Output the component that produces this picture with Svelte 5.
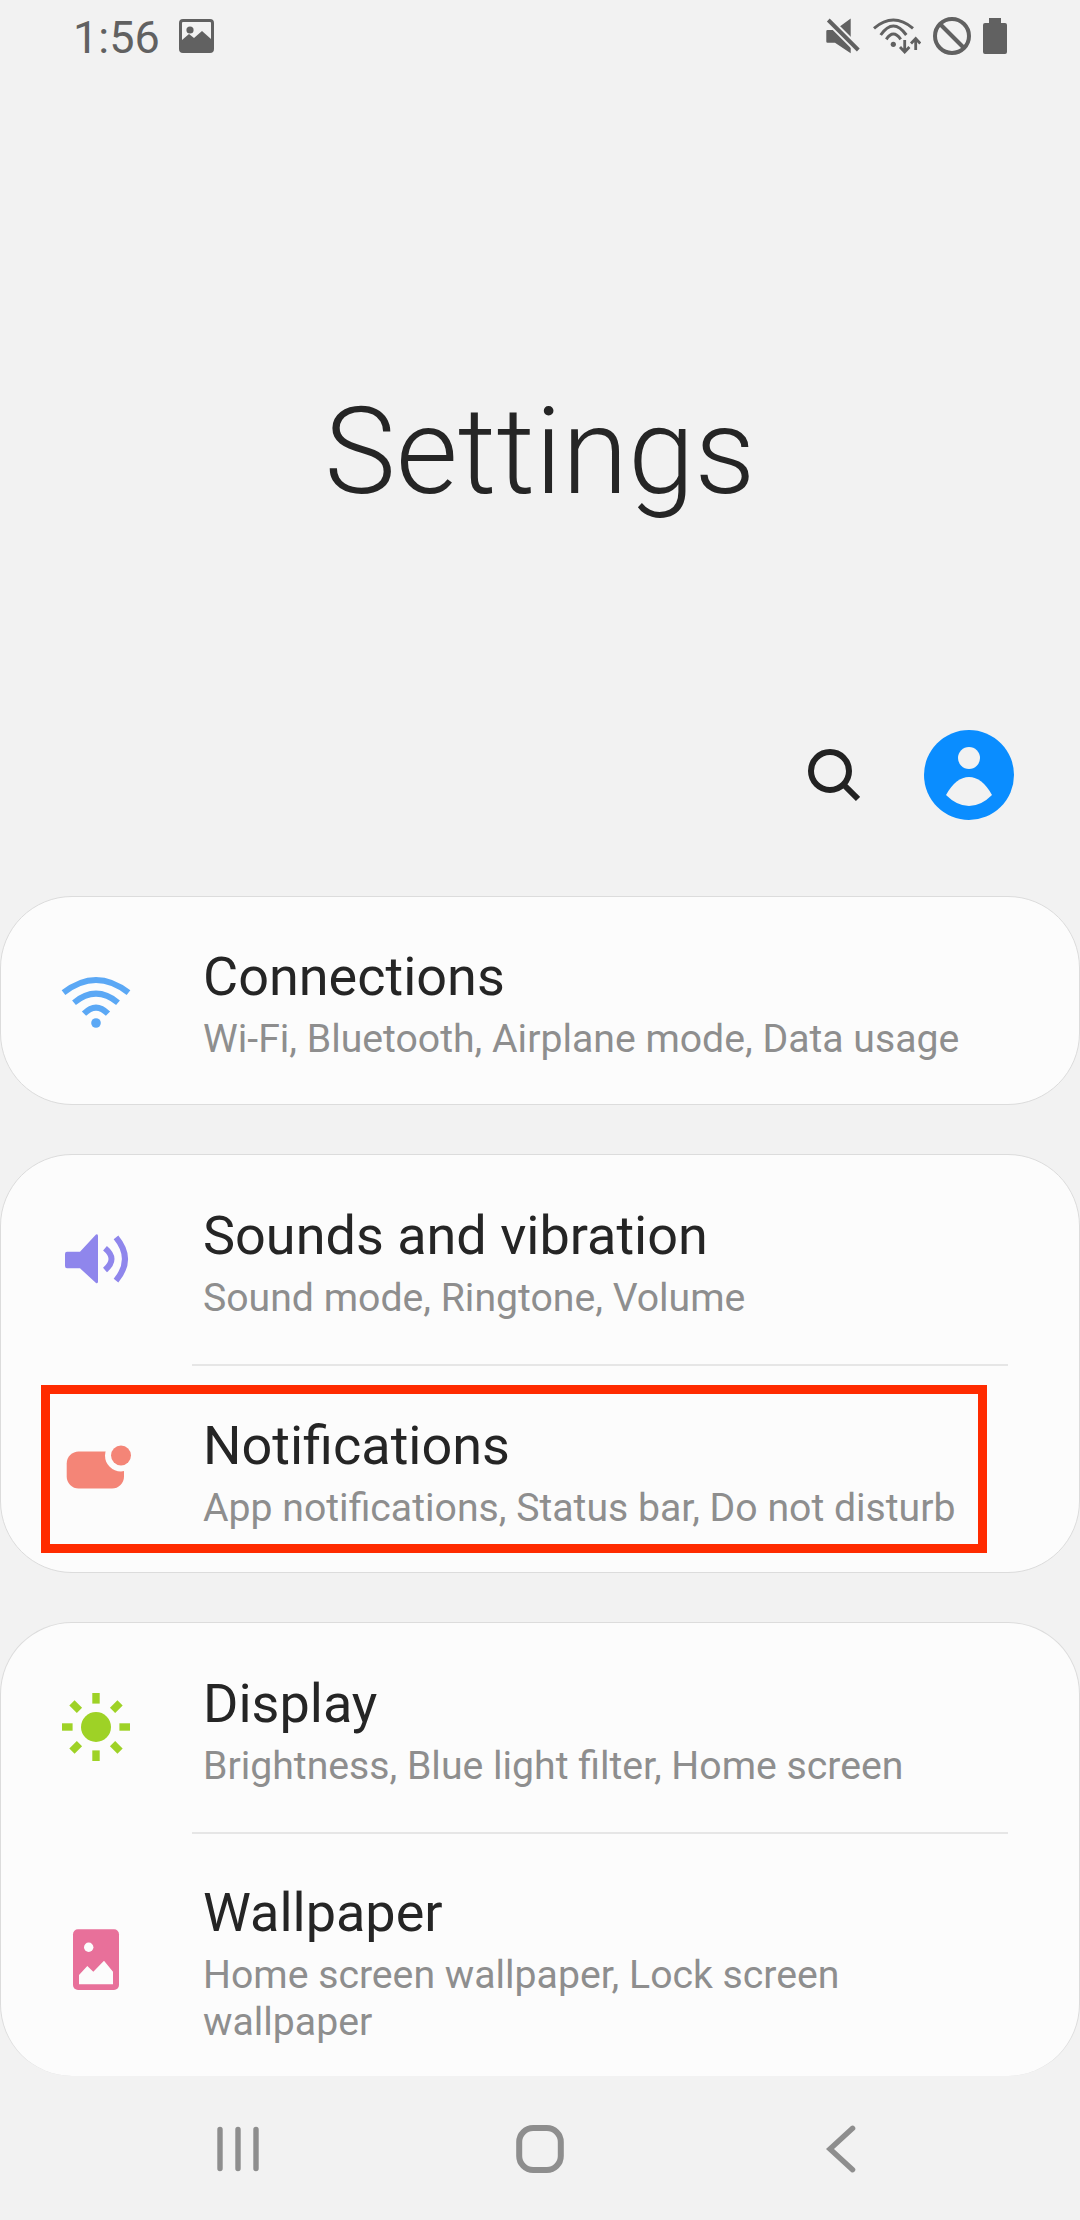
<script>
  const sections = [
    [
      { id: 'wifi', title: 'Connections', sub: 'Wi-Fi, Bluetooth, Airplane mode, Data usage' }
    ],
    [
      { id: 'sound', title: 'Sounds and vibration', sub: 'Sound mode, Ringtone, Volume' },
      { id: 'notif', title: 'Notifications', sub: 'App notifications, Status bar, Do not disturb', marked: true }
    ],
    [
      { id: 'display', title: 'Display', sub: 'Brightness, Blue light filter, Home screen' },
      { id: 'wallpaper', title: 'Wallpaper', sub: 'Home screen wallpaper, Lock screen wallpaper' }
    ]
  ];
</script>

{#snippet icon(id)}
  <svg class="row-icon" viewBox="0 0 72 72" width="72" height="72">
    {#if id === 'wifi'}
      <g fill="none" stroke="#5ba8f5" stroke-width="6">
        <path d="M3.5 27.7Q36 2.3 68.5 27.7" />
        <path d="M14 37.7Q36 19.7 58 37.7" />
        <path d="M24 48.7Q36 36.7 48 48.7" />
      </g>
      <circle cx="36" cy="58" r="4.8" fill="#5ba8f5" />
    {:else if id === 'sound'}
      <path d="M7 27.7H20L36 10.5Q38 9.5 38 12V57.5Q38 60 36 59L20 44.3H7Q5 44.3 5 42V30Q5 27.7 7 27.7Z" fill="#8f86ec" />
      <g fill="none" stroke="#8f86ec" stroke-width="6">
        <path d="M45 24.3Q58 35 45 46" />
        <path d="M56 13.3Q74 35 56 56.6" />
      </g>
    {:else if id === 'notif'}
      <rect x="6.7" y="18.5" width="57.3" height="37" rx="12" fill="#f48577" />
      <circle cx="61" cy="22.5" r="16" fill="#fcfcfc" />
      <circle cx="61" cy="22.5" r="10" fill="#f48577" />
    {:else if id === 'display'}
      <g fill="#9ed226">
        <circle cx="36" cy="35" r="15" />
        {#each [0, 45, 90, 135, 180, 225, 270, 315] as a}
          <rect x="32.3" y="1" width="7.4" height="10.6" transform="rotate({a} 36 35)" />
        {/each}
      </g>
    {:else if id === 'wallpaper'}
      <rect x="13" y="5.3" width="46" height="60.7" rx="5" fill="#e8709a" />
      <circle cx="28.7" cy="23.3" r="4.7" fill="#fcfcfc" />
      <path d="M19 51L27.3 42L33.3 47.7L44 36.7L53 47.7V60.3H19Z" fill="#fcfcfc" />
    {/if}
  </svg>
{/snippet}

<div class="screen">
  <div class="status">
    <span class="time">1:56</span>
    <svg class="pic" viewBox="0 0 35 34" width="35" height="34">
      <rect x="1.5" y="1.5" width="32" height="31" rx="2.5" fill="none" stroke="#616161" stroke-width="3" />
      <path d="M3 28V21L10 15L15 19L23 12L32 20V31H3Z" fill="#616161" />
      <circle cx="11" cy="11" r="3.6" fill="#616161" />
    </svg>
    <div class="status-right">
      <svg viewBox="0 0 36 36" width="36" height="36">
        <path d="M2.5 12H10L25.7 .5V35.3L10 24.7H2.5Q1.3 24.7 1.3 23.5V13.2Q1.3 12 2.5 12Z" fill="#616161" />
        <path d="M3.3 2L33.3 32" stroke="#f2f2f2" stroke-width="8" />
        <path d="M3.3 2L33.3 32" stroke="#616161" stroke-width="4" />
      </svg>
      <svg viewBox="0 0 48 36" width="48" height="36">
        <g fill="none" stroke="#616161" stroke-width="3">
          <path d="M1 10.3Q20.3 -6.3 40 10.3" />
          <path d="M7.7 17Q20.3 -1 33.3 17" />
          <path d="M13.3 21.3Q20.3 10.7 27.7 21.3" />
        </g>
        <circle cx="20.3" cy="26.3" r="2.6" fill="#616161" />
        <g fill="none" stroke="#616161" stroke-width="2.8">
          <path d="M31.7 22V34M27 29L31.7 34L36.4 29" />
          <path d="M42.7 32V20.5M38 25.5L42.7 20.5L47.3 25.5" />
        </g>
      </svg>
      <svg viewBox="0 0 38 38" width="38" height="38">
        <circle cx="19" cy="19" r="17" fill="none" stroke="#616161" stroke-width="4" />
        <path d="M7 7L31 31" stroke="#616161" stroke-width="4" />
      </svg>
      <svg viewBox="0 0 24 36" width="24" height="36">
        <path d="M6 0H18V5H22Q24 5 24 7V34Q24 36 22 36H2Q0 36 0 34V7Q0 5 2 5H6Z" fill="#616161" />
      </svg>
    </div>
  </div>

  <h1>Settings</h1>

  <div class="actions">
    <svg viewBox="0 0 60 60" width="60" height="60">
      <circle cx="30" cy="26" r="19" fill="none" stroke="#222" stroke-width="6" />
      <path d="M43 39L58 54" stroke="#222" stroke-width="6" />
    </svg>
    <svg viewBox="0 0 90 90" width="90" height="90">
      <circle cx="45" cy="45" r="45" fill="#0a8dff" />
      <circle cx="45" cy="28" r="11" fill="#f2f2f2" />
      <path d="M22 65Q32 47 45 47Q58 47 68 65Q57 76 45 76Q33 76 22 65Z" fill="#f2f2f2" />
    </svg>
  </div>

  <div class="cards">
    {#each sections as rows, i}
      <section class="card" class:last={i === 2}>
        {#each rows as r, j}
          {#if j > 0}<div class="sep"></div>{/if}
          <div class="row r-{r.id}">
            {@render icon(r.id)}
            <div class="text">
              <div class="title">{r.title}</div>
              <div class="sub">{r.sub}</div>
            </div>
            {#if r.marked}<div class="mark"></div>{/if}
          </div>
        {/each}
      </section>
    {/each}
  </div>

  <nav class="nav">
    <svg viewBox="0 0 72 72" width="72" height="72">
      <path d="M18 16.5V55.5M36 16.5V55.5M54 16.5V55.5" stroke="#8e8e8e" stroke-width="5.4" stroke-linecap="round" />
    </svg>
    <svg viewBox="0 0 72 72" width="72" height="72">
      <rect x="15.2" y="15" width="41.6" height="42" rx="14" fill="none" stroke="#8e8e8e" stroke-width="6" />
    </svg>
    <svg viewBox="0 0 72 72" width="72" height="72">
      <path d="M47.6 15.3L25 36L47.6 56.7" fill="none" stroke="#8e8e8e" stroke-width="5.4" stroke-linecap="round" />
    </svg>
  </nav>
</div>

<style>
  :global(body) { margin: 0; background: #f2f2f2; }
  .screen {
    width: 1080px;
    height: 2220px;
    background: #f2f2f2;
    font-family: Roboto, "Liberation Sans", sans-serif;
    overflow: hidden;
    display: flex;
    flex-direction: column;
  }
  svg { display: block; flex: none; }

  .status {
    height: 72px;
    padding: 0 73px 0 73px;
    display: flex;
    align-items: center;
    color: #616161;
  }
  .time { font-size: 45px; line-height: 72px; width: 106px; padding-top: 3px; }
  .status-right { margin-left: auto; display: flex; align-items: center; gap: 12px; }

  h1 {
    margin: 0;
    height: 658px;
    padding-top: 305px;
    box-sizing: border-box;
    text-align: center;
    font-size: 120px;
    line-height: 150px;
    font-weight: 300;
    color: #252525;
  }

  .actions {
    height: 90px;
    padding-right: 66px;
    display: flex;
    justify-content: flex-end;
    align-items: center;
    gap: 64px;
  }

  .cards {
    margin-top: 76px;
    display: flex;
    flex-direction: column;
    gap: 49px;
  }
  .card {
    background: #fcfcfc;
    border: 1px solid #dcdcdc;
    border-radius: 72px;
  }
  .card.last { border-bottom: 0; }
  .row {
    position: relative;
    height: 209px;
    padding-left: 59px;
    display: flex;
    align-items: center;
  }
  .row.r-wifi { height: 207px; }
  .row.r-notif { height: 206px; }
  .row.r-wallpaper { height: 242px; }
  .row.r-wallpaper .row-icon { margin-top: 10px; }
  .row.r-wallpaper .text { padding-top: 15px; }
  .row-icon { margin-right: 71px; }
  .text { flex: 1; padding-right: 100px; padding-top: 5px; }
  .title { font-size: 54px; line-height: 68px; color: #252525; }
  .sub { font-size: 39.2px; line-height: 47px; color: #8e8e8e; margin-top: 5px; }
  .sep { height: 2px; background: #e6e6e6; margin: 0 71px 0 191px; }
  .mark {
    position: absolute;
    left: 40px;
    top: 19px;
    width: 946px;
    height: 168px;
    box-sizing: border-box;
    border: 9px solid #ff2b00;
  }

  .nav {
    flex: 1;
    padding: 37px 203px 0 202px;
    display: flex;
    justify-content: space-between;
    align-items: flex-start;
  }
</style>
